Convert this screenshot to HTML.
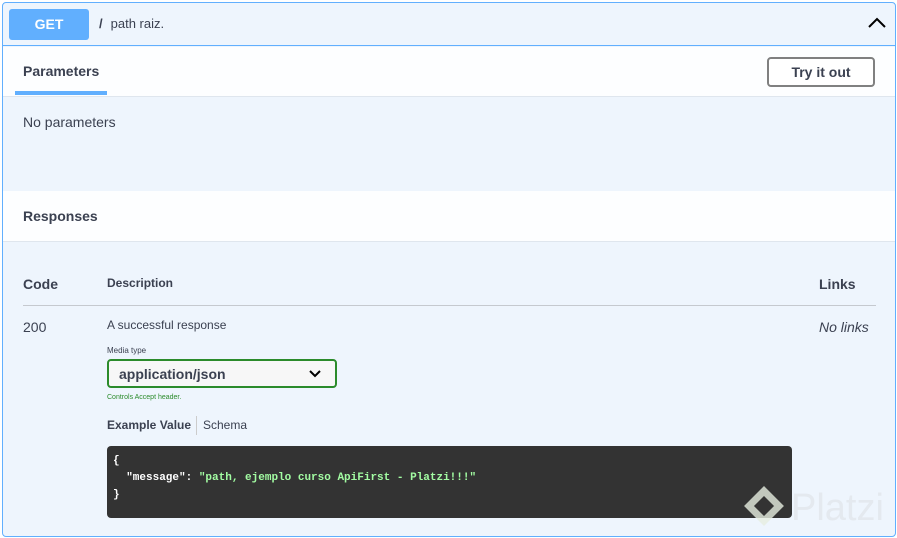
<!DOCTYPE html>
<html><head><style>
*{box-sizing:border-box;margin:0;padding:0}
body{width:897px;height:538px;background:#fff;font-family:"Liberation Sans",sans-serif;color:#3b4151;position:relative;overflow:hidden}
.op{position:absolute;left:2px;top:2px;width:894px;height:535px;border:1px solid #61affe;border-radius:4px;background:#eef5fd;overflow:hidden}
.hdr{position:absolute;left:0;top:0;width:100%;height:43px;border-bottom:1px solid #61affe}
.get{position:absolute;left:6px;top:6px;width:80px;height:31px;background:#61affe;border-radius:3px;color:#fff;font-weight:bold;font-size:14px;text-align:center;line-height:31px}
.path{position:absolute;left:96px;top:13px;font-size:13px;color:#3b4151}
.sec{position:absolute;left:0;width:100%;background:rgba(255,255,255,.85)}
.t{position:absolute;font-size:14px;font-weight:bold}
.try{position:absolute;left:764px;top:54px;width:108px;height:30px;border:2px solid #808080;border-radius:4px;font-size:14px;font-weight:bold;text-align:center;line-height:26px;background:#fff}
.code{position:absolute;left:104px;top:443px;width:685px;height:72px;background:#333;border-radius:4px;font-family:"Liberation Mono",monospace;font-size:11px;font-weight:bold;color:#fff;padding:7px 6px;line-height:17px;white-space:pre}
</style></head><body>
<div class="op">
<div class="hdr"><div class="get">GET</div><div class="path"><b style="margin-right:8px">/</b>path raiz.</div>
<svg style="position:absolute;left:864px;top:12px" width="20" height="16" viewBox="0 0 20 16"><path d="M2 12 L10 4 L18 12" fill="none" stroke="#000" stroke-width="2"/></svg></div>
<div class="sec" style="top:44px;height:50px;border-bottom:1px solid #dfe6ee"></div>
<div class="t" style="left:20px;top:60px;font-size:14px">Parameters</div>
<div style="position:absolute;left:12px;top:88px;width:92px;height:4px;background:#61affe"></div>
<div class="try">Try it out</div>
<div style="position:absolute;left:20px;top:111px;font-size:14px">No parameters</div>
<div class="sec" style="top:188px;height:51px;border-bottom:1px solid #dfe6ee"></div>
<div class="t" style="left:20px;top:205px">Responses</div>
<div class="t" style="left:20px;top:273px">Code</div>
<div style="position:absolute;left:104px;top:273px;font-size:12px;font-weight:bold">Description</div>
<div class="t" style="left:816px;top:273px">Links</div>
<div style="position:absolute;left:20px;top:302px;width:853px;height:1px;background:#c5c9cf"></div>
<div style="position:absolute;left:20px;top:316px;font-size:14px">200</div>
<div style="position:absolute;left:104px;top:315px;font-size:12px">A successful response</div>
<div style="position:absolute;left:816px;top:316px;font-size:14px;font-style:italic">No links</div>
<div style="position:absolute;left:104px;top:343px;font-size:8px">Media type</div>
<div style="position:absolute;left:104px;top:356px;width:230px;height:29px;border:2px solid #2b8b2b;border-radius:4px;background:#f7f7f7;font-size:14px;font-weight:bold;padding:5px 10px">application/json
<svg style="position:absolute;left:200px;top:9px" width="12" height="8" viewBox="0 0 12 8"><path d="M1 1 L6 6 L11 1" fill="none" stroke="#000" stroke-width="2"/></svg></div>
<div style="position:absolute;left:104px;top:391px;font-size:7px;color:#2b8b2b">Controls Accept header.</div>
<div style="position:absolute;left:104px;top:415px;font-size:12px;font-weight:bold">Example Value</div>
<div style="position:absolute;left:193px;top:413px;width:1px;height:19px;background:#ccc"></div>
<div style="position:absolute;left:200px;top:415px;font-size:12px">Schema</div>
<div class="code">{
  "message": <span style="color:#a2fca2">"path, ejemplo curso ApiFirst - Platzi!!!"</span>
}</div>
<svg style="position:absolute;left:738px;top:482px" width="46" height="46" viewBox="0 0 46 46"><path d="M23 6 L38 21 L23 36 L8 21 Z" fill="none" stroke="#e6ede0" stroke-width="7" opacity=".8"/></svg>
<div style="position:absolute;left:788px;top:484px;font-size:38px;color:#e4e9ef">Platzi</div>
</div>
</body></html>
